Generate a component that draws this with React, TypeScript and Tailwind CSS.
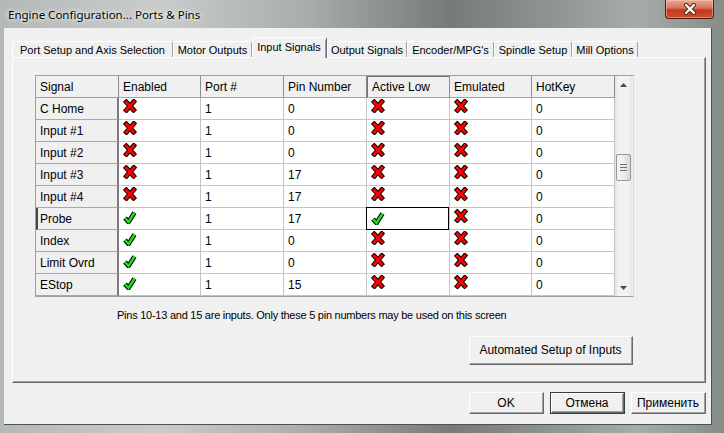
import React from 'react';

const RedX = () => (
  <svg width="14" height="14" viewBox="0 0 14 14" className="block">
    <path d="M3.2 3 L10.6 11 M10.8 2.6 L3.4 11.2" stroke="#000" strokeWidth="4.8" strokeLinecap="square" fill="none" />
    <path d="M3.2 3 L10.6 11 M10.8 2.6 L3.4 11.2" stroke="#ff0000" strokeWidth="2.8" strokeLinecap="square" fill="none" />
  </svg>
);

const GreenCheck = () => (
  <svg width="14" height="14" viewBox="0 0 14 14" className="block">
    <path d="M2 8 L5.5 12 L11.5 2.5" stroke="#000" strokeWidth="4.6" strokeLinejoin="miter" strokeLinecap="butt" fill="none" />
    <path d="M2 8 L5.5 12 L11.5 2.5" stroke="#19e619" strokeWidth="2.4" strokeLinejoin="miter" strokeLinecap="butt" fill="none" />
  </svg>
);

type Row = { name: string; en: boolean; port: string; pin: string; low: boolean; emu: boolean; hot: string };

const rows: Row[] = [
  { name: 'C Home', en: false, port: '1', pin: '0', low: false, emu: false, hot: '0' },
  { name: 'Input #1', en: false, port: '1', pin: '0', low: false, emu: false, hot: '0' },
  { name: 'Input #2', en: false, port: '1', pin: '0', low: false, emu: false, hot: '0' },
  { name: 'Input #3', en: false, port: '1', pin: '17', low: false, emu: false, hot: '0' },
  { name: 'Input #4', en: false, port: '1', pin: '17', low: false, emu: false, hot: '0' },
  { name: 'Probe', en: true, port: '1', pin: '17', low: true, emu: false, hot: '0' },
  { name: 'Index', en: true, port: '1', pin: '0', low: false, emu: false, hot: '0' },
  { name: 'Limit Ovrd', en: true, port: '1', pin: '0', low: false, emu: false, hot: '0' },
  { name: 'EStop', en: true, port: '1', pin: '15', low: false, emu: false, hot: '0' },
];

const tabs = [
  { label: 'Port Setup and Axis Selection', cls: 'w-[161px]' },
  { label: 'Motor Outputs', cls: 'w-[79px]' },
  { label: 'Input Signals', cls: 'w-[75px]', active: true },
  { label: 'Output Signals', cls: 'w-[80px]' },
  { label: "Encoder/MPG's", cls: 'w-[87px]' },
  { label: 'Spindle Setup', cls: 'w-[78px]' },
  { label: 'Mill Options', cls: 'w-[66px]' },
];

const cellBase = 'h-[22px] shrink-0 border-b border-r border-[#c4c4c4] bg-white flex pl-[4px] text-[12px] text-black';

const Icon = ({ ok }: { ok: boolean }) => (
  <div className={ok ? 'pt-[2px]' : 'pt-[1px]'}>{ok ? <GreenCheck /> : <RedX />}</div>
);

const ClassicButton = ({ children, cls, def }: { children: React.ReactNode; cls: string; def?: boolean }) => (
  <div className={`${cls} ${def ? 'border border-[#3c3c3c]' : ''} shrink-0`}>
    <div className="h-full w-full border-t border-l border-white border-r border-b border-r-[#696969] border-b-[#696969] bg-[#f0f0f0]">
      <div className="h-full w-full border-r border-b border-r-[#a0a0a0] border-b-[#a0a0a0] flex items-center justify-center text-[12px] text-black">
        {children}
      </div>
    </div>
  </div>
);

export default function App() {
  return (
    <div className="w-[724px] h-[433px] overflow-hidden flex flex-col font-['Liberation_Sans',Arial,sans-serif] bg-[linear-gradient(90deg,#b4b9b7_0%,#c8cdcb_22%,#a9aeab_42%,#767b77_62%,#8e9490_76%,#a6aca8_88%,#868c88_100%)]">
      {/* Title bar */}
      <div className="h-[28px] shrink-0 flex items-start justify-between">
        <div className="pl-[8px] pt-[7px] text-[11.5px] leading-[16px] text-black font-['Noto_Sans',sans-serif] [text-shadow:0_0_6px_rgba(255,255,255,0.95),0_0_3px_rgba(255,255,255,0.8)]">
          Engine Configuration... Ports &amp; Pins
        </div>
        <div className="mr-[10px] w-[49px] h-[19px] rounded-b-[4px] border border-t-0 border-[#4b1c12] bg-[linear-gradient(180deg,#e9a995_0%,#d9735c_45%,#c4381c_55%,#c9502f_100%)] flex items-center justify-center shadow-[inset_0_0_0_1px_rgba(255,210,200,0.45)]">
          <svg width="14" height="12" viewBox="0 0 14 12">
            <path d="M3 2 L11 10 M11 2 L3 10" stroke="#5a1f14" strokeWidth="4.2" strokeLinecap="round" />
            <path d="M3 2 L11 10 M11 2 L3 10" stroke="#ffffff" strokeWidth="2.4" strokeLinecap="round" />
          </svg>
        </div>
      </div>

      {/* Client area */}
      <div className="ml-[4px] w-[708px] h-[397px] shrink-0 bg-[#f0f0f0] border-r border-b border-[#4e524f] flex flex-col">
        {/* Tabs */}
        <div className="ml-[8px] mt-[9px] h-[20px] flex items-end relative z-10">
          {tabs.map((t) =>
            t.active ? (
              <div key={t.label} className={`${t.cls} h-[21px] -mb-[1px] shrink-0 bg-[#f0f0f0] border-t border-l border-white border-r border-r-[#696969] rounded-t-[2px] flex justify-center pt-[2px] text-[11px] leading-[14px] text-black`}>
                <span className="border-r border-r-[#a0a0a0] w-full h-full flex justify-center">{t.label}</span>
              </div>
            ) : (
              <div key={t.label} className={`${t.cls} h-[16px] shrink-0 bg-[#f0f0f0] border-t border-l border-white border-r border-r-[#a0a0a0] rounded-t-[2px] flex items-center justify-center text-[11px] leading-[14px] text-black`}>
                {t.label}
              </div>
            )
          )}
        </div>

        {/* Panel */}
        <div className="ml-[8px] w-[694px] h-[326px] shrink-0 border-t border-l border-white border-r border-b border-r-[#696969] border-b-[#696969]">
          <div className="h-full w-full border-r border-b border-r-[#a0a0a0] border-b-[#a0a0a0] pl-[22px] pt-[17px] flex flex-col">
            {/* Grid */}
            <div className="w-[599px] h-[222px] border border-[#a0a0a0] border-r-[#dcdcdc] flex bg-[#f0f0f0]">
              <div className="w-[579px] flex flex-col">
                {/* Header */}
                <div className="flex">
                  {[
                    ['Signal', 'w-[83px]'],
                    ['Enabled', 'w-[82px]'],
                    ['Port #', 'w-[83px]'],
                    ['Pin Number', 'w-[83px]'],
                    ['Active Low', 'w-[83px]'],
                    ['Emulated', 'w-[82px]'],
                    ['HotKey', 'w-[83px]'],
                  ].map(([h, w]) => (
                    <div
                      key={h}
                      className={`${w} h-[22px] shrink-0 bg-[#f0f0f0] border-b border-r border-r-[#8c8c8c] border-b-[#a0a0a0] flex items-center pl-[4px] text-[12px] text-black ${h === 'Active Low' ? 'border-t border-l border-t-[#707070] border-l-[#707070] pl-[3px]' : ''}`}
                    >
                      {h}
                    </div>
                  ))}
                </div>
                {rows.map((r) => (
                  <div key={r.name} className="flex">
                    <div className={`w-[83px] h-[22px] shrink-0 bg-[#f0f0f0] border-b border-r-2 border-b-[#a8a8a8] border-r-[#7a7a7a] flex items-center text-[12px] text-black ${r.name === 'Probe' ? 'border-l-2 border-l-[#444444] pl-[2px]' : 'pl-[4px]'}`}>
                      {r.name}
                    </div>
                    <div className={`${cellBase} w-[82px]`}>
                      <Icon ok={r.en} />
                    </div>
                    <div className={`${cellBase} w-[83px] items-center`}>{r.port}</div>
                    <div className={`${cellBase} w-[83px] items-center`}>{r.pin}</div>
                    <div className={`${cellBase} w-[83px] relative`}>
                      {r.name === 'Probe' ? (
                        <>
                          <div className="absolute -left-[1px] -top-[1px] w-[83px] h-[23px] border border-black" />
                          <div className="pt-[3px]"><GreenCheck /></div>
                        </>
                      ) : (
                        <Icon ok={r.low} />
                      )}
                    </div>
                    <div className={`${cellBase} w-[82px]`}>
                      <Icon ok={r.emu} />
                    </div>
                    <div className={`${cellBase} w-[83px] items-center`}>{r.hot}</div>
                  </div>
                ))}
              </div>
              {/* Scrollbar */}
              <div className="w-[17px] h-[220px] shrink-0 flex flex-col bg-[linear-gradient(90deg,#e3e3e3_0%,#f2f2f2_20%,#f2f2f2_80%,#e6e6e6_100%)]">
                <div className="h-[17px] shrink-0 flex items-center justify-center">
                  <svg width="7" height="4" viewBox="0 0 7 4"><path d="M0 4 L3.5 0 L7 4 Z" fill="#4a4a4a" /></svg>
                </div>
                <div className="h-[61px] shrink-0" />
                <div className="ml-[1px] w-[15px] h-[27px] shrink-0 rounded-[2px] border border-[#959595] bg-[linear-gradient(90deg,#f4f4f4_0%,#ececec_50%,#d8d8d8_100%)] flex flex-col items-center justify-center gap-[2px]">
                  <div className="w-[7px] h-[1px] bg-[#6e6e6e]" />
                  <div className="w-[7px] h-[1px] bg-[#6e6e6e]" />
                  <div className="w-[7px] h-[1px] bg-[#6e6e6e]" />
                </div>
                <div className="flex-1" />
                <div className="h-[17px] shrink-0 flex items-center justify-center">
                  <svg width="7" height="4" viewBox="0 0 7 4"><path d="M0 0 L7 0 L3.5 4 Z" fill="#4a4a4a" /></svg>
                </div>
              </div>
            </div>

            {/* Note */}
            <div className="mt-[11px] pl-[82px] text-[11px] leading-[14px] text-black tracking-[-0.25px]">
              Pins 10-13 and 15 are inputs. Only these 5 pin numbers may be used on this screen
            </div>

            {/* Automated button */}
            <div className="w-[599px] mt-[14px] flex justify-end pr-[1px]">
              <ClassicButton cls="w-[164px] h-[29px]">Automated Setup of Inputs</ClassicButton>
            </div>
          </div>
        </div>

        {/* Bottom buttons */}
        <div className="mt-[9px] ml-[8px] w-[694px] flex justify-end">
          <ClassicButton cls="w-[75px] h-[22px]">OK</ClassicButton>
          <div className="w-[6px] shrink-0" />
          <ClassicButton cls="w-[75px] h-[22px]" def>Отмена</ClassicButton>
          <div className="w-[6px] shrink-0" />
          <ClassicButton cls="w-[75px] h-[22px]">Применить</ClassicButton>
        </div>
      </div>
    </div>
  );
}
